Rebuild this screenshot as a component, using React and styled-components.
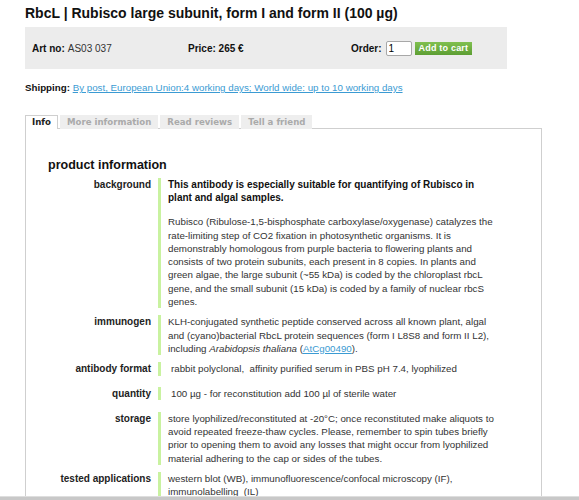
import React from "react";
import styled, { createGlobalStyle } from "styled-components";

const Global = createGlobalStyle`
  html, body { margin: 0; padding: 0; background: #fff; }
  body { font-family: "Liberation Sans", Arial, sans-serif; color: #333; }
`;

const Page = styled.div`
  padding: 5px 0 0 25px;
`;

const Title = styled.h1`
  margin: 0;
  font-size: 14px;
  line-height: 17px;
  font-weight: bold;
  color: #111;
`;

const BuyBox = styled.div`
  margin-top: 5px;
  width: 482px;
  height: 42px;
  box-sizing: border-box;
  background: #ececec;
  padding-left: 7px;
  display: grid;
  grid-template-columns: 156px 163px auto;
  align-items: center;
  font-size: 10px;
  color: #333;
`;

const Cell = styled.div`
  display: flex;
  align-items: center;
  gap: 3px;
  white-space: nowrap;
`;

const B = styled.b`
  color: #111;
`;

const Qty = styled.input`
  width: 26px;
  height: 15px;
  box-sizing: border-box;
  border: 1px solid #a8a8a8;
  border-radius: 2px;
  background: #fff;
  font-family: "Liberation Sans", Arial, sans-serif;
  font-size: 10px;
  padding: 0 2px;
  margin-left: 1px;
`;

const CartButton = styled.button`
  height: 13px;
  padding: 0 4px;
  border: 0;
  background: linear-gradient(#80c050, #5d9e33);
  color: #fff;
  font-family: "Liberation Sans", Arial, sans-serif;
  font-weight: bold;
  font-size: 9px;
  line-height: 13px;
  letter-spacing: 0.2px;
`;

const Shipping = styled.div`
  margin-top: 12px;
  font-size: 9.75px;
  line-height: 14px;
`;

const Link = styled.a`
  color: #3b9bd3;
  text-decoration: underline;
`;

const Tabs = styled.div`
  margin-top: 20px;
  display: flex;
  gap: 2px;
  position: relative;
  z-index: 1;
`;

const Tab = styled.div`
  font-family: "DejaVu Sans", Verdana, sans-serif;
  font-weight: bold;
  font-size: 8.6px;
  line-height: 13px;
  height: 14px;
  box-sizing: border-box;
  padding: 0 6px;
  background: ${(p) => (p.$active ? "#fff" : "#eeeeee")};
  color: ${(p) => (p.$active ? "#222" : "#aaa")};
  border: 1px solid ${(p) => (p.$active ? "#cfcfcf" : "#eeeeee")};
  border-bottom: 0;
`;

const Panel = styled.div`
  width: 517px;
  box-sizing: border-box;
  border: 1px solid #cfcfcf;
  margin-top: -1px;
  padding: 29px 20px 40px 22px;
`;

const Heading = styled.h2`
  margin: 0 0 5px;
  font-size: 12.5px;
  line-height: 15px;
  font-weight: bold;
  color: #111;
`;

const Specs = styled.div`
  display: flex;
  flex-direction: column;
`;

const Row = styled.div`
  display: grid;
  grid-template-columns: 110px 338px;
  align-items: start;
  margin-bottom: ${(p) => (p.$loose ? "11.5px" : "7px")};
`;

const Label = styled.div`
  padding-right: 7px;
  text-align: right;
  font-size: 10px;
  line-height: 13.3px;
  font-weight: bold;
  color: #222;
  white-space: nowrap;
`;

const Value = styled.div`
  border-left: 3px solid #c9f2a0;
  padding-left: ${(p) => (p.$pad ? "10px" : "7px")};
  font-size: 9.75px;
  line-height: 13.3px;
  color: #333;
`;

const Lead = styled.div`
  font-weight: bold;
  font-size: 10px;
  color: #111;
  margin-bottom: 10.7px;
`;

const BottomBar = styled.div`
  position: fixed;
  left: 0;
  right: 0;
  bottom: 0;
  height: 3px;
  background: #c8c8c8;
  border-top: 1px solid #dedede;
`;

export default function App() {
  return (
    <>
      <Global />
      <Page>
        <Title>RbcL | Rubisco large subunit, form I and form II (100 µg)</Title>
        <BuyBox>
          <Cell>
            <B>Art no:</B> AS03 037
          </Cell>
          <Cell>
            <B>Price: 265 €</B>
          </Cell>
          <Cell>
            <B>Order:</B>
            <Qty defaultValue="1" />
            <CartButton>Add to cart</CartButton>
          </Cell>
        </BuyBox>
        <Shipping>
          <B>Shipping:</B>{" "}
          <Link href="#">
            By post, European Union:4 working days; World wide: up to 10 working days
          </Link>
        </Shipping>
        <Tabs>
          <Tab $active>Info</Tab>
          <Tab>More information</Tab>
          <Tab>Read reviews</Tab>
          <Tab>Tell a friend</Tab>
        </Tabs>
        <Panel>
          <Heading>product information</Heading>
          <Specs>
            <Row>
              <Label>background</Label>
              <Value>
                <Lead>
                  This antibody is especially suitable for quantifying of Rubisco in plant and
                  algal samples.
                </Lead>
                Rubisco (Ribulose-1,5-bisphosphate carboxylase/oxygenase) catalyzes the
                rate-limiting step of CO2 fixation in photosynthetic organisms. It is
                demonstrably homologous from purple bacteria to flowering plants and consists of
                two protein subunits, each present in 8 copies. In plants and green algae, the
                large subunit (~55 kDa) is coded by the chloroplast rbcL gene, and the small
                subunit (15 kDa) is coded by a family of nuclear rbcS genes.
              </Value>
            </Row>
            <Row>
              <Label>immunogen</Label>
              <Value>
                KLH-conjugated synthetic peptide conserved across all known plant, algal and
                (cyano)bacterial RbcL protein sequences (form I L8S8 and form II L2), including{" "}
                <i>Arabidopsis thaliana</i> (<Link href="#">AtCg00490</Link>).
              </Value>
            </Row>
            <Row $loose>
              <Label>antibody format</Label>
              <Value $pad>
                rabbit polyclonal,&nbsp; affinity purified serum in PBS pH 7.4, lyophilized
              </Value>
            </Row>
            <Row $loose>
              <Label>quantity</Label>
              <Value $pad>100 µg - for reconstitution add 100 µl of sterile water</Value>
            </Row>
            <Row>
              <Label>storage</Label>
              <Value>
                store lyophilized/reconstituted at -20°C; once reconstituted make aliquots to
                avoid repeated freeze-thaw cycles. Please, remember to spin tubes briefly prior to
                opening them to avoid any losses that might occur from lyophilized material
                adhering to the cap or sides of the tubes.
              </Value>
            </Row>
            <Row>
              <Label>tested applications</Label>
              <Value>
                western blot (WB), immunofluorescence/confocal microscopy (IF),
                immunolabelling&nbsp; (IL)
              </Value>
            </Row>
          </Specs>
        </Panel>
      </Page>
      <BottomBar />
    </>
  );
}
